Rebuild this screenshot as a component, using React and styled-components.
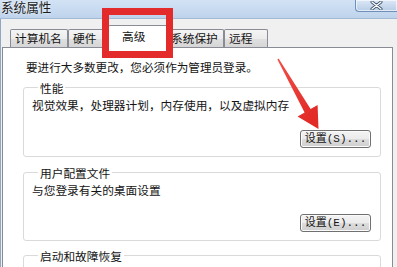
import React from 'react';
import styled, { createGlobalStyle } from 'styled-components';

const Global = createGlobalStyle`
  html, body { margin: 0; padding: 0; background: #f0f0f0; overflow: hidden; }
  body { font-family: "Noto Sans CJK SC", "Liberation Sans", sans-serif; }
  * { box-sizing: border-box; }
`;

const Window = styled.div`
  position: relative;
  width: 397px;
  height: 267px;
  overflow: hidden;
  display: flex;
  flex-direction: column;
  background: #f0f0f0;
  font-family: "Noto Sans CJK SC", "Liberation Sans", sans-serif;
  color: #141414;
`;

const TitleBar = styled.div`
  flex: none;
  height: 19px;
  display: flex;
  justify-content: space-between;
  align-items: flex-start;
  background: linear-gradient(#d3e3f5, #bed3eb);
  border-bottom: 1px solid #a3bad6;
`;

const Title = styled.div`
  font-size: 12.6px;
  line-height: 14px;
  margin-top: 0;
  padding-left: 1px;
  color: #1c1c1c;
  text-shadow: 0 0 3px #ffffff;
  white-space: nowrap;
`;

const CloseButton = styled.div`
  width: 42px;
  height: 12px;
  display: flex;
  align-items: center;
  justify-content: center;
  border: 1px solid #6f8fb8;
  border-top: none;
  border-right: none;
  border-radius: 0 0 0 4px;
  background: linear-gradient(#dce8f6, #b7cce6);
  box-shadow: inset 0 0 0 1px rgba(255, 255, 255, 0.6);
`;

const Client = styled.div`
  flex: 1;
  display: flex;
  flex-direction: column;
  min-height: 0;
  padding: 0 4px 0 1px;
  border-left: 1px solid #8fa7c3;
`;

const TabStrip = styled.div`
  flex: none;
  height: 29px;
  margin-bottom: -1px;
  padding-left: 8px;
  display: flex;
  align-items: flex-end;
  position: relative;
  z-index: 2;
`;

const Tab = styled.div`
  flex: none;
  width: ${p => p.$w}px;
  height: ${p => (p.$active ? 23 : 18)}px;
  margin: 0 ${p => (p.$active ? -2 : 0)}px ${p => (p.$active ? 0 : 1)}px;
  padding: ${p => (p.$active ? '3px 0 0 13px' : '1px 0 0 4px')};
  border: 1px solid #898c95;
  border-bottom: none;
  border-radius: 2px 2px 0 0;
  background: ${p =>
    p.$active
      ? '#ffffff'
      : 'linear-gradient(#f4f4f4 0%, #ececec 50%, #e0e0e0 51%, #d6d6d6 100%)'};
  font-size: 11.7px;
  line-height: 14px;
  white-space: nowrap;
  position: relative;
  z-index: ${p => (p.$active ? 2 : 1)};
`;

const Panel = styled.div`
  flex: 1;
  min-height: 0;
  overflow: hidden;
  display: flex;
  flex-direction: column;
  background: #ffffff;
  border: 1px solid #898c95;
  border-bottom: none;
  padding: 12px 11px 0 20px;
`;

const Intro = styled.div`
  margin-left: 3px;
  font-size: 11.6px;
  line-height: 14px;
  white-space: nowrap;
`;

const Group = styled.fieldset`
  flex: none;
  margin: ${p => p.$top}px 0 0;
  min-width: 0;
  min-height: ${p => p.$minH || 0}px;
  padding: 4px 9px 8px 8px;
  border: 1px solid #dadada;
  border-radius: 3px;
`;

const Legend = styled.legend`
  margin-left: 6px;
  padding: 0 2px;
  font-size: 11.7px;
  line-height: 13px;
  white-space: nowrap;
`;

const GroupText = styled.div`
  font-size: 11.7px;
  line-height: 14px;
  white-space: nowrap;
`;

const ButtonRow = styled.div`
  display: flex;
  justify-content: flex-end;
  margin-top: ${p => p.$gap}px;
`;

const Button = styled.button`
  width: 71px;
  height: 18px;
  padding: 0;
  border: 1px solid #707070;
  border-radius: 3px;
  background: linear-gradient(#f3f3f3 0%, #ebebeb 50%, #dddddd 51%, #cfcfcf 100%);
  box-shadow: inset 0 0 0 1px #fbfbfb;
  font-family: "Liberation Mono", "Noto Sans CJK SC", monospace;
  font-size: 11px;
  line-height: 16px;
  color: #151515;
  white-space: nowrap;
`;

const Highlight = styled.div`
  position: absolute;
  left: 102px;
  top: 8px;
  width: 71px;
  height: 50px;
  border: 7px solid #e42b2b;
  pointer-events: none;
  z-index: 5;
`;

const Overlay = styled.svg`
  position: absolute;
  left: 0;
  top: 0;
  width: 397px;
  height: 267px;
  pointer-events: none;
  z-index: 6;
`;

const tabs = [
  { label: '计算机名', w: 58 },
  { label: '硬件', w: 42 },
  { label: '高级', w: 60, active: true },
  { label: '系统保护', w: 58 },
  { label: '远程', w: 44 },
];

export default function App() {
  return (
    <>
      <Global />
      <Window>
        <TitleBar>
          <Title>系统属性</Title>
          <CloseButton>
            <svg width="13" height="9" viewBox="0 0 13 9">
              <path d="M2 1 L11 8 M11 1 L2 8" stroke="#3a4d66" strokeWidth="3" strokeLinecap="round" />
              <path d="M2 1 L11 8 M11 1 L2 8" stroke="#ffffff" strokeWidth="1.4" strokeLinecap="round" />
            </svg>
          </CloseButton>
        </TitleBar>
        <Client>
          <TabStrip>
            {tabs.map(t => (
              <Tab key={t.label} $w={t.w} $active={t.active}>
                {t.label}
              </Tab>
            ))}
          </TabStrip>
          <Panel>
            <Intro>要进行大多数更改，您必须作为管理员登录。</Intro>
            <Group $top={7}>
              <Legend>性能</Legend>
              <GroupText>视觉效果，处理器计划，内存使用，以及虚拟内存</GroupText>
              <ButtonRow $gap={18}>
                <Button>设置(S)...</Button>
              </ButtonRow>
            </Group>
            <Group $top={9}>
              <Legend>用户配置文件</Legend>
              <GroupText>与您登录有关的桌面设置</GroupText>
              <ButtonRow $gap={17}>
                <Button>设置(E)...</Button>
              </ButtonRow>
            </Group>
            <Group $top={8} $minH={60}>
              <Legend>启动和故障恢复</Legend>
            </Group>
          </Panel>
        </Client>
        <Highlight />
        <Overlay viewBox="0 0 397 267">
          <defs>
            <linearGradient id="arrowFill" x1="0" y1="0" x2="0.5" y2="1">
              <stop offset="0" stopColor="#f0504a" />
              <stop offset="1" stopColor="#e22a26" />
            </linearGradient>
          </defs>
          <polygon
            points="278.6,58.6 310.6,109.1 317.6,105 318.5,129 297.6,116.6 304.6,112.5 277.4,59.4"
            fill="url(#arrowFill)"
          />
        </Overlay>
      </Window>
    </>
  );
}
